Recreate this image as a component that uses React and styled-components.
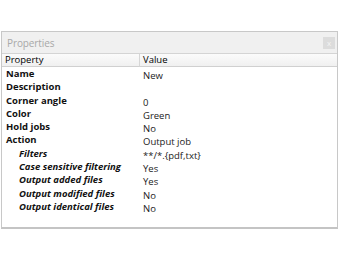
import React from "react";
import styled, { createGlobalStyle } from "styled-components";

const Global = createGlobalStyle`
  html, body { margin: 0; padding: 0; background: #ffffff; }
  body { font-family: "Open Sans", "Noto Sans", sans-serif; }
`;

const Page = styled.div`
  width: 340px;
  height: 260px;
  padding: 31px 2px 0 1px;
  box-sizing: border-box;
`;

const Panel = styled.div`
  height: 198px;
  box-sizing: border-box;
  border: 1px solid #c8c8c8;
  border-bottom: 2px solid #c4c4c4;
  display: flex;
  flex-direction: column;
  background: #fff;
`;

const TitleBar = styled.div`
  height: 21px;
  background: #f0f0f0;
  border-bottom: 1px solid #d4d4d4;
  display: flex;
  align-items: center;
  justify-content: space-between;
  padding: 0 2px 0 5px;
`;

const Title = styled.span`
  font-size: 10px;
  color: #a8a8a8;
  letter-spacing: -0.1px;
`;

const CloseBox = styled.div`
  width: 12px;
  height: 12px;
  background: #dcdcdc;
  color: #f4f4f4;
  font-size: 8px;
  line-height: 12px;
  text-align: center;
`;

const Grid = styled.div`
  display: grid;
  grid-template-columns: 137px 1fr;
`;

const HeadCell = styled.div`
  height: 12px;
  line-height: 12px;
  font-size: 9.5px;
  color: #000;
  padding-left: 3px;
  background: linear-gradient(#fbfbfb, #f0f0f0);
  border-bottom: 1px solid #d0d0d0;
  border-left: ${(p) => (p.$value ? "1px solid #d6d6d6" : "none")};
`;

const Label = styled.div`
  height: 13.3px;
  line-height: 13.3px;
  font-size: 9.5px;
  font-weight: 700;
  font-style: ${(p) => (p.$sub ? "italic" : "normal")};
  padding-left: ${(p) => (p.$sub ? "17px" : "4px")};
  color: #111;
  white-space: nowrap;
`;

const Value = styled.div`
  height: 13.3px;
  line-height: 17px;
  font-size: 9.5px;
  padding-left: 4px;
  color: #222;
  white-space: nowrap;
`;

const rows = [
  ["Name", "New"],
  ["Description", ""],
  ["Corner angle", "0"],
  ["Color", "Green"],
  ["Hold jobs", "No"],
  ["Action", "Output job"],
  ["Filters", "**/*.{pdf,txt}", true],
  ["Case sensitive filtering", "Yes", true],
  ["Output added files", "Yes", true],
  ["Output modified files", "No", true],
  ["Output identical files", "No", true],
];

export default function App() {
  return (
    <Page>
      <Global />
      <Panel>
        <TitleBar>
          <Title>Properties</Title>
          <CloseBox>x</CloseBox>
        </TitleBar>
        <Grid>
          <HeadCell>Property</HeadCell>
          <HeadCell $value>Value</HeadCell>
          {rows.map(([l, v, sub]) => (
            <React.Fragment key={l}>
              <Label $sub={sub}>{l}</Label>
              <Value>{v}</Value>
            </React.Fragment>
          ))}
        </Grid>
      </Panel>
    </Page>
  );
}
